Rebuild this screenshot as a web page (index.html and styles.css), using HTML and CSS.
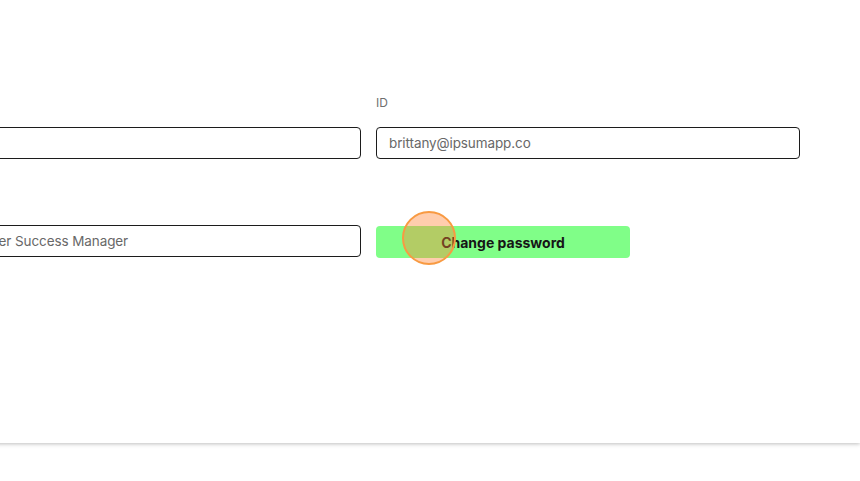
FILE: index.html
```html
<!DOCTYPE html>
<html lang="en">
<head>
    <meta charset="UTF-8">
    <meta name="viewport" content="width=device-width, initial-scale=1.0">
    <title>Profile</title>
    <link rel="stylesheet" href="styles.css">
</head>
<body>
    <div class="page">
        <div class="card">
            <form class="profile_form">
                <div class="field">
                    <label for="full-name">Full name</label>
                    <input type="text" id="full-name" value="">
                </div>
                <div class="field">
                    <label for="user-id">ID</label>
                    <input type="text" id="user-id" value="brittany@ipsumapp.co">
                </div>
                <div class="field">
                    <label for="role">Role</label>
                    <input type="text" id="role" value="Customer Success Manager">
                </div>
                <button type="button" class="change_bnt">Change password</button>
            </form>
        </div>
        <div class="click_marker"></div>
    </div>
</body>
</html>
```

FILE: styles.css
```css
body { margin: 0; background: #fff; font-family: Inter, "Noto Sans", sans-serif; overflow: hidden; }
.page { position: relative; height: 481px; }
.card { margin-left: -63px; height: 443px; padding: 95px 60px 0 0; box-sizing: border-box; background: #fff; box-shadow: 0 1px 4px rgba(0, 0, 0, 0.26); }
.profile_form { display: grid; grid-template-columns: 424px 424px; column-gap: 15px; row-gap: 34px; }
.field label { display: block; font-size: 12px; line-height: 16px; color: #6e6e6e; margin-bottom: 16px; }
.field input { display: block; width: 100%; height: 32px; box-sizing: border-box; padding: 0 12px; border: 1px solid #1c1c1c; border-radius: 4px; font-family: Inter, "Noto Sans", sans-serif; font-size: 13.5px; letter-spacing: -0.1px; color: #686868; background: #fff; }
.change_bnt { align-self: end; width: 254px; height: 32px; margin-bottom: -1px; border: none; border-radius: 4px; background: #80fe88; color: #161616; font-family: Inter, "Noto Sans", sans-serif; font-size: 14px; font-weight: 700; }
.click_marker { position: absolute; left: 402px; top: 211px; width: 50px; height: 50px; border: 2px solid #f89a42; border-radius: 50%; background: rgba(255, 130, 50, 0.4); }
```
